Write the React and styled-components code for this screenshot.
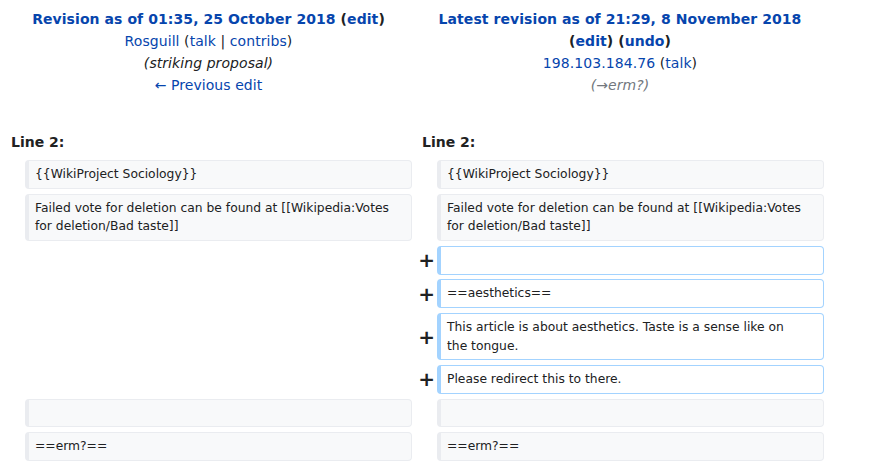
import React from "react";
import styled, { createGlobalStyle } from "styled-components";

const GlobalStyle = createGlobalStyle`
    html, body {
        margin: 0;
        padding: 0;
        background: #fff;
    }
    body {
        font-family: "DejaVu Sans", "Liberation Sans", sans-serif;
        color: #202122;
    }
`;

const titles = {
    old: {
        heading: "Revision as of 01:35, 25 October 2018",
        links: ["edit"],
    },
    new: {
        heading: "Latest revision as of 21:29, 8 November 2018",
        links: ["edit", "undo"],
    },
};

const rows = [
    { type: "context", text: "{{WikiProject Sociology}}" },
    {
        type: "context",
        text: "Failed vote for deletion can be found at [[Wikipedia:Votes for deletion/Bad taste]]",
    },
    { type: "added", text: "" },
    { type: "added", text: "==aesthetics==" },
    {
        type: "added",
        text: "This article is about aesthetics. Taste is a sense like on the tongue.",
    },
    { type: "added", text: "Please redirect this to there." },
    { type: "context", text: "" },
    { type: "context", text: "==erm?==" },
];

const TitleLinks = ({ links }) => (
    <>
        {links.map((l) => (
            <span key={l}>
                {" "}
                <Paren>
                    (<Link href="#">{l}</Link>)
                </Paren>
            </span>
        ))}
    </>
);

const App = () => {
    return (
        <>
            <GlobalStyle />
            <DiffTable>
                <TitleCell>
                    <Heading>
                        <Link href="#">{titles.old.heading}</Link>
                        <TitleLinks links={titles.old.links} />
                    </Heading>
                    <div>
                        <Link href="#">Rosguill</Link> (<Link href="#">talk</Link> |{" "}
                        <Link href="#">contribs</Link>)
                    </div>
                    <Summary>(striking proposal)</Summary>
                    <div>
                        <Link href="#">← Previous edit</Link>
                    </div>
                </TitleCell>
                <TitleCell>
                    <Heading>
                        <Link href="#">{titles.new.heading}</Link>
                        <TitleLinks links={titles.new.links} />
                    </Heading>
                    <div>
                        <Link href="#">198.103.184.76</Link> (<Link href="#">talk</Link>)
                    </div>
                    <Summary $muted>(→erm?)</Summary>
                </TitleCell>

                <LineNo>Line 2:</LineNo>
                <LineNo>Line 2:</LineNo>

                {rows.map((row, i) =>
                    row.type === "context" ? (
                        <React.Fragment key={i}>
                            <Marker />
                            <Content>{row.text}</Content>
                            <Marker />
                            <Content>{row.text}</Content>
                        </React.Fragment>
                    ) : (
                        <React.Fragment key={i}>
                            <Marker />
                            <Empty />
                            <Marker>+</Marker>
                            <Content $added>{row.text}</Content>
                        </React.Fragment>
                    )
                )}
            </DiffTable>
        </>
    );
};

export default App;

const DiffTable = styled.div`
    display: grid;
    grid-template-columns: 24px 387px 25px 387px;
    row-gap: 4.8px;
    padding: 8px 0 0 1px;
    font-size: 14px;
`;

const TitleCell = styled.div`
    grid-column: span 2;
    text-align: center;
    line-height: 22px;
    padding: 0 4px 0 8px;
    margin-bottom: 30px;
    letter-spacing: 0.07px;
`;

const Heading = styled.div`
    font-weight: bold;
`;

const Paren = styled.span`
    white-space: nowrap;
`;

const Link = styled.a`
    color: #0645ad;
    text-decoration: none;
`;

const Summary = styled.div`
    font-style: italic;
    color: ${(p) => (p.$muted ? "#72777d" : "#202122")};
`;

const LineNo = styled.div`
    grid-column: span 2;
    font-weight: bold;
    padding-left: 10px;
    line-height: 22px;
    margin-bottom: 2.5px;
`;

const Marker = styled.div`
    display: flex;
    align-items: center;
    justify-content: flex-end;
    padding-right: 2px;
    font-weight: bold;
    font-size: 20px;
    line-height: 1;
`;

const Content = styled.div`
    box-sizing: border-box;
    font-size: 12.32px;
    line-height: 18.8px;
    min-height: 28.7px;
    padding: 3.95px 17px 3.95px 6px;
    border: 1px solid ${(p) => (p.$added ? "#a3d3ff" : "#eaecf0")};
    border-left-width: 4px;
    border-radius: 4px;
    background: ${(p) => (p.$added ? "#fff" : "#f8f9fa")};
    word-wrap: break-word;
`;

const Empty = styled.div``;
